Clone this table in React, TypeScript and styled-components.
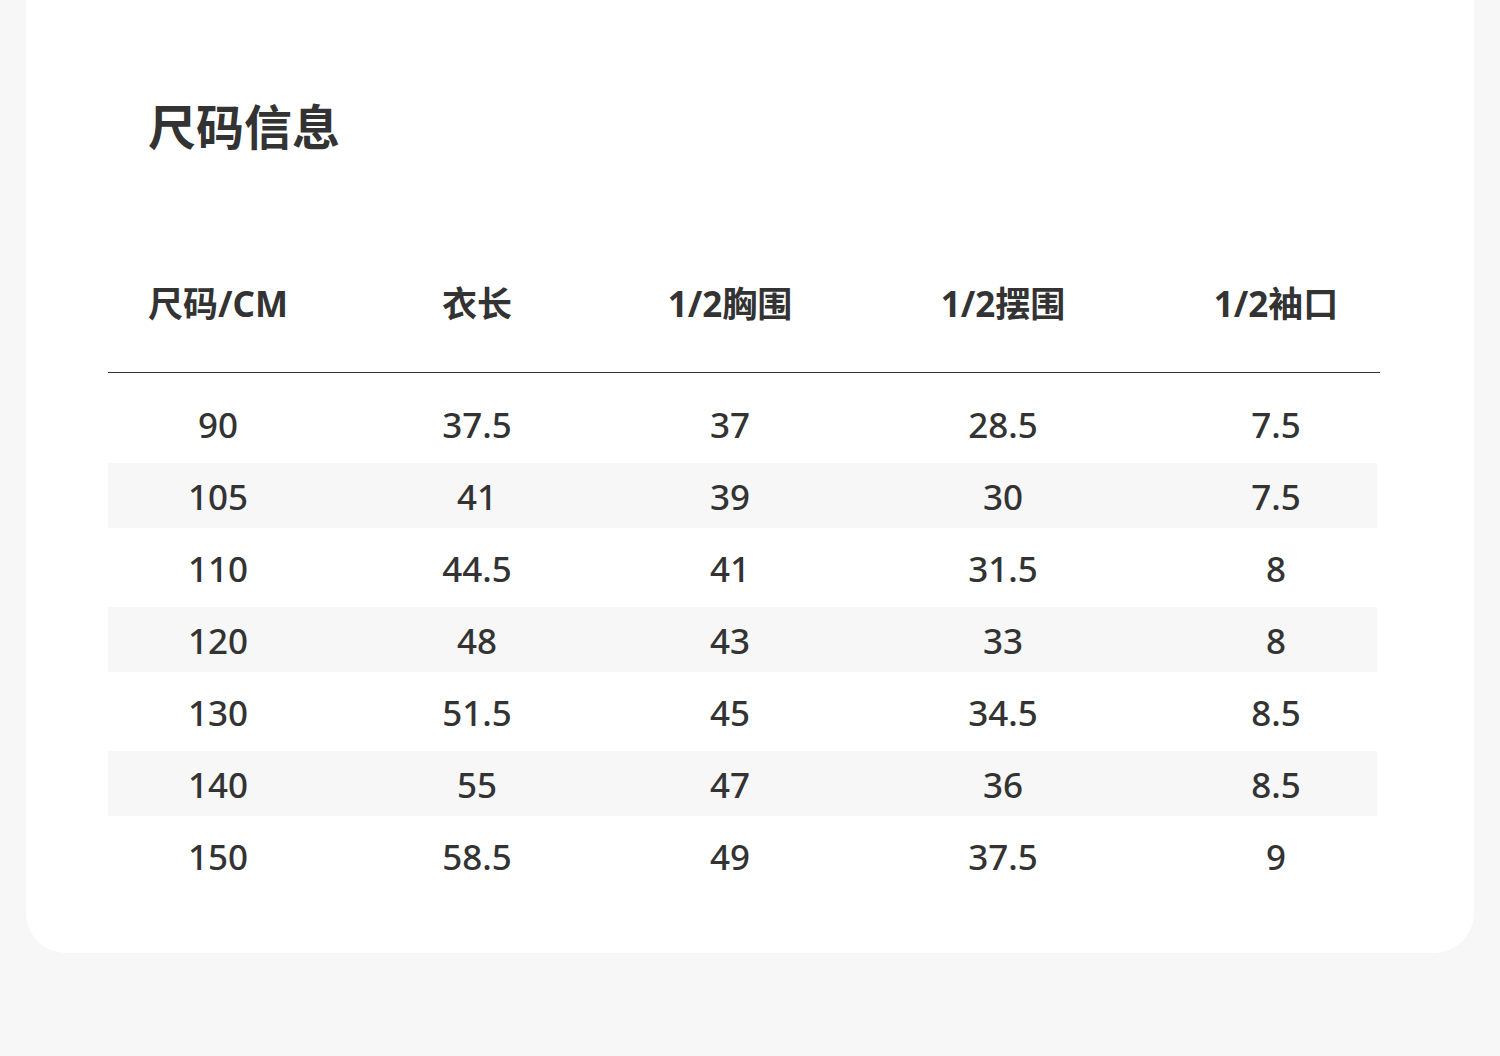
import React from "react";
import styled, { createGlobalStyle } from "styled-components";

const GlobalStyle = createGlobalStyle`
  html, body {
    margin: 0;
    padding: 0;
    background: #f7f7f7;
  }
  body {
    font-family: "Noto Sans", "Noto Sans CJK SC", sans-serif;
    color: #333;
  }
`;

const Page = styled.div`
  width: 1500px;
  height: 1056px;
  padding: 0 26px;
  box-sizing: border-box;
  background: #f7f7f7;
`;

const Card = styled.div`
  height: 953px;
  background: #fff;
  border-radius: 0 0 40px 40px;
  padding: 100px 0 0 82px;
  box-sizing: border-box;
`;

const Title = styled.h1`
  margin: 0 0 138px 40px;
  font-family: "Noto Sans CJK SC", sans-serif;
  font-size: 48px;
  line-height: 48px;
  font-weight: 700;
  color: #333;
`;

const Table = styled.div`
  width: 1272px;
`;

const cols = "220px 298px 208px 338px 208px";

const HeadRow = styled.div`
  display: grid;
  grid-template-columns: ${cols};
  padding-bottom: 51px;
  border-bottom: 1px solid #333;
`;

const HeadCell = styled.div`
  text-align: center;
  font-family: "Noto Sans", "Noto Sans CJK SC", sans-serif;
  font-size: 35px;
  line-height: 35px;
  font-weight: 700;
  color: #333;
`;

const Body = styled.div`
  padding-top: 18px;
`;

const Row = styled.div<{ $striped: boolean }>`
  display: grid;
  grid-template-columns: ${cols};
  align-items: center;
  height: 65px;
  margin-bottom: 7px;
  width: 1269px;
  background: ${(p) => (p.$striped ? "#f7f7f7" : "transparent")};
`;

const Cell = styled.div`
  text-align: center;
  font-size: 35px;
  font-weight: 500;
  line-height: 65px;
  padding-top: 1px;
  color: #333;
`;

const headers = ["尺码/CM", "衣长", "1/2胸围", "1/2摆围", "1/2袖口"];

const rows = [
  ["90", "37.5", "37", "28.5", "7.5"],
  ["105", "41", "39", "30", "7.5"],
  ["110", "44.5", "41", "31.5", "8"],
  ["120", "48", "43", "33", "8"],
  ["130", "51.5", "45", "34.5", "8.5"],
  ["140", "55", "47", "36", "8.5"],
  ["150", "58.5", "49", "37.5", "9"],
];

export default function App() {
  return (
    <>
      <GlobalStyle />
      <Page>
        <Card>
          <Title>尺码信息</Title>
          <Table>
            <HeadRow>
              {headers.map((h) => (
                <HeadCell key={h}>{h}</HeadCell>
              ))}
            </HeadRow>
            <Body>
              {rows.map((r, i) => (
                <Row key={r[0]} $striped={i % 2 === 1}>
                  {r.map((v, j) => (
                    <Cell key={j}>{v}</Cell>
                  ))}
                </Row>
              ))}
            </Body>
          </Table>
        </Card>
      </Page>
    </>
  );
}
